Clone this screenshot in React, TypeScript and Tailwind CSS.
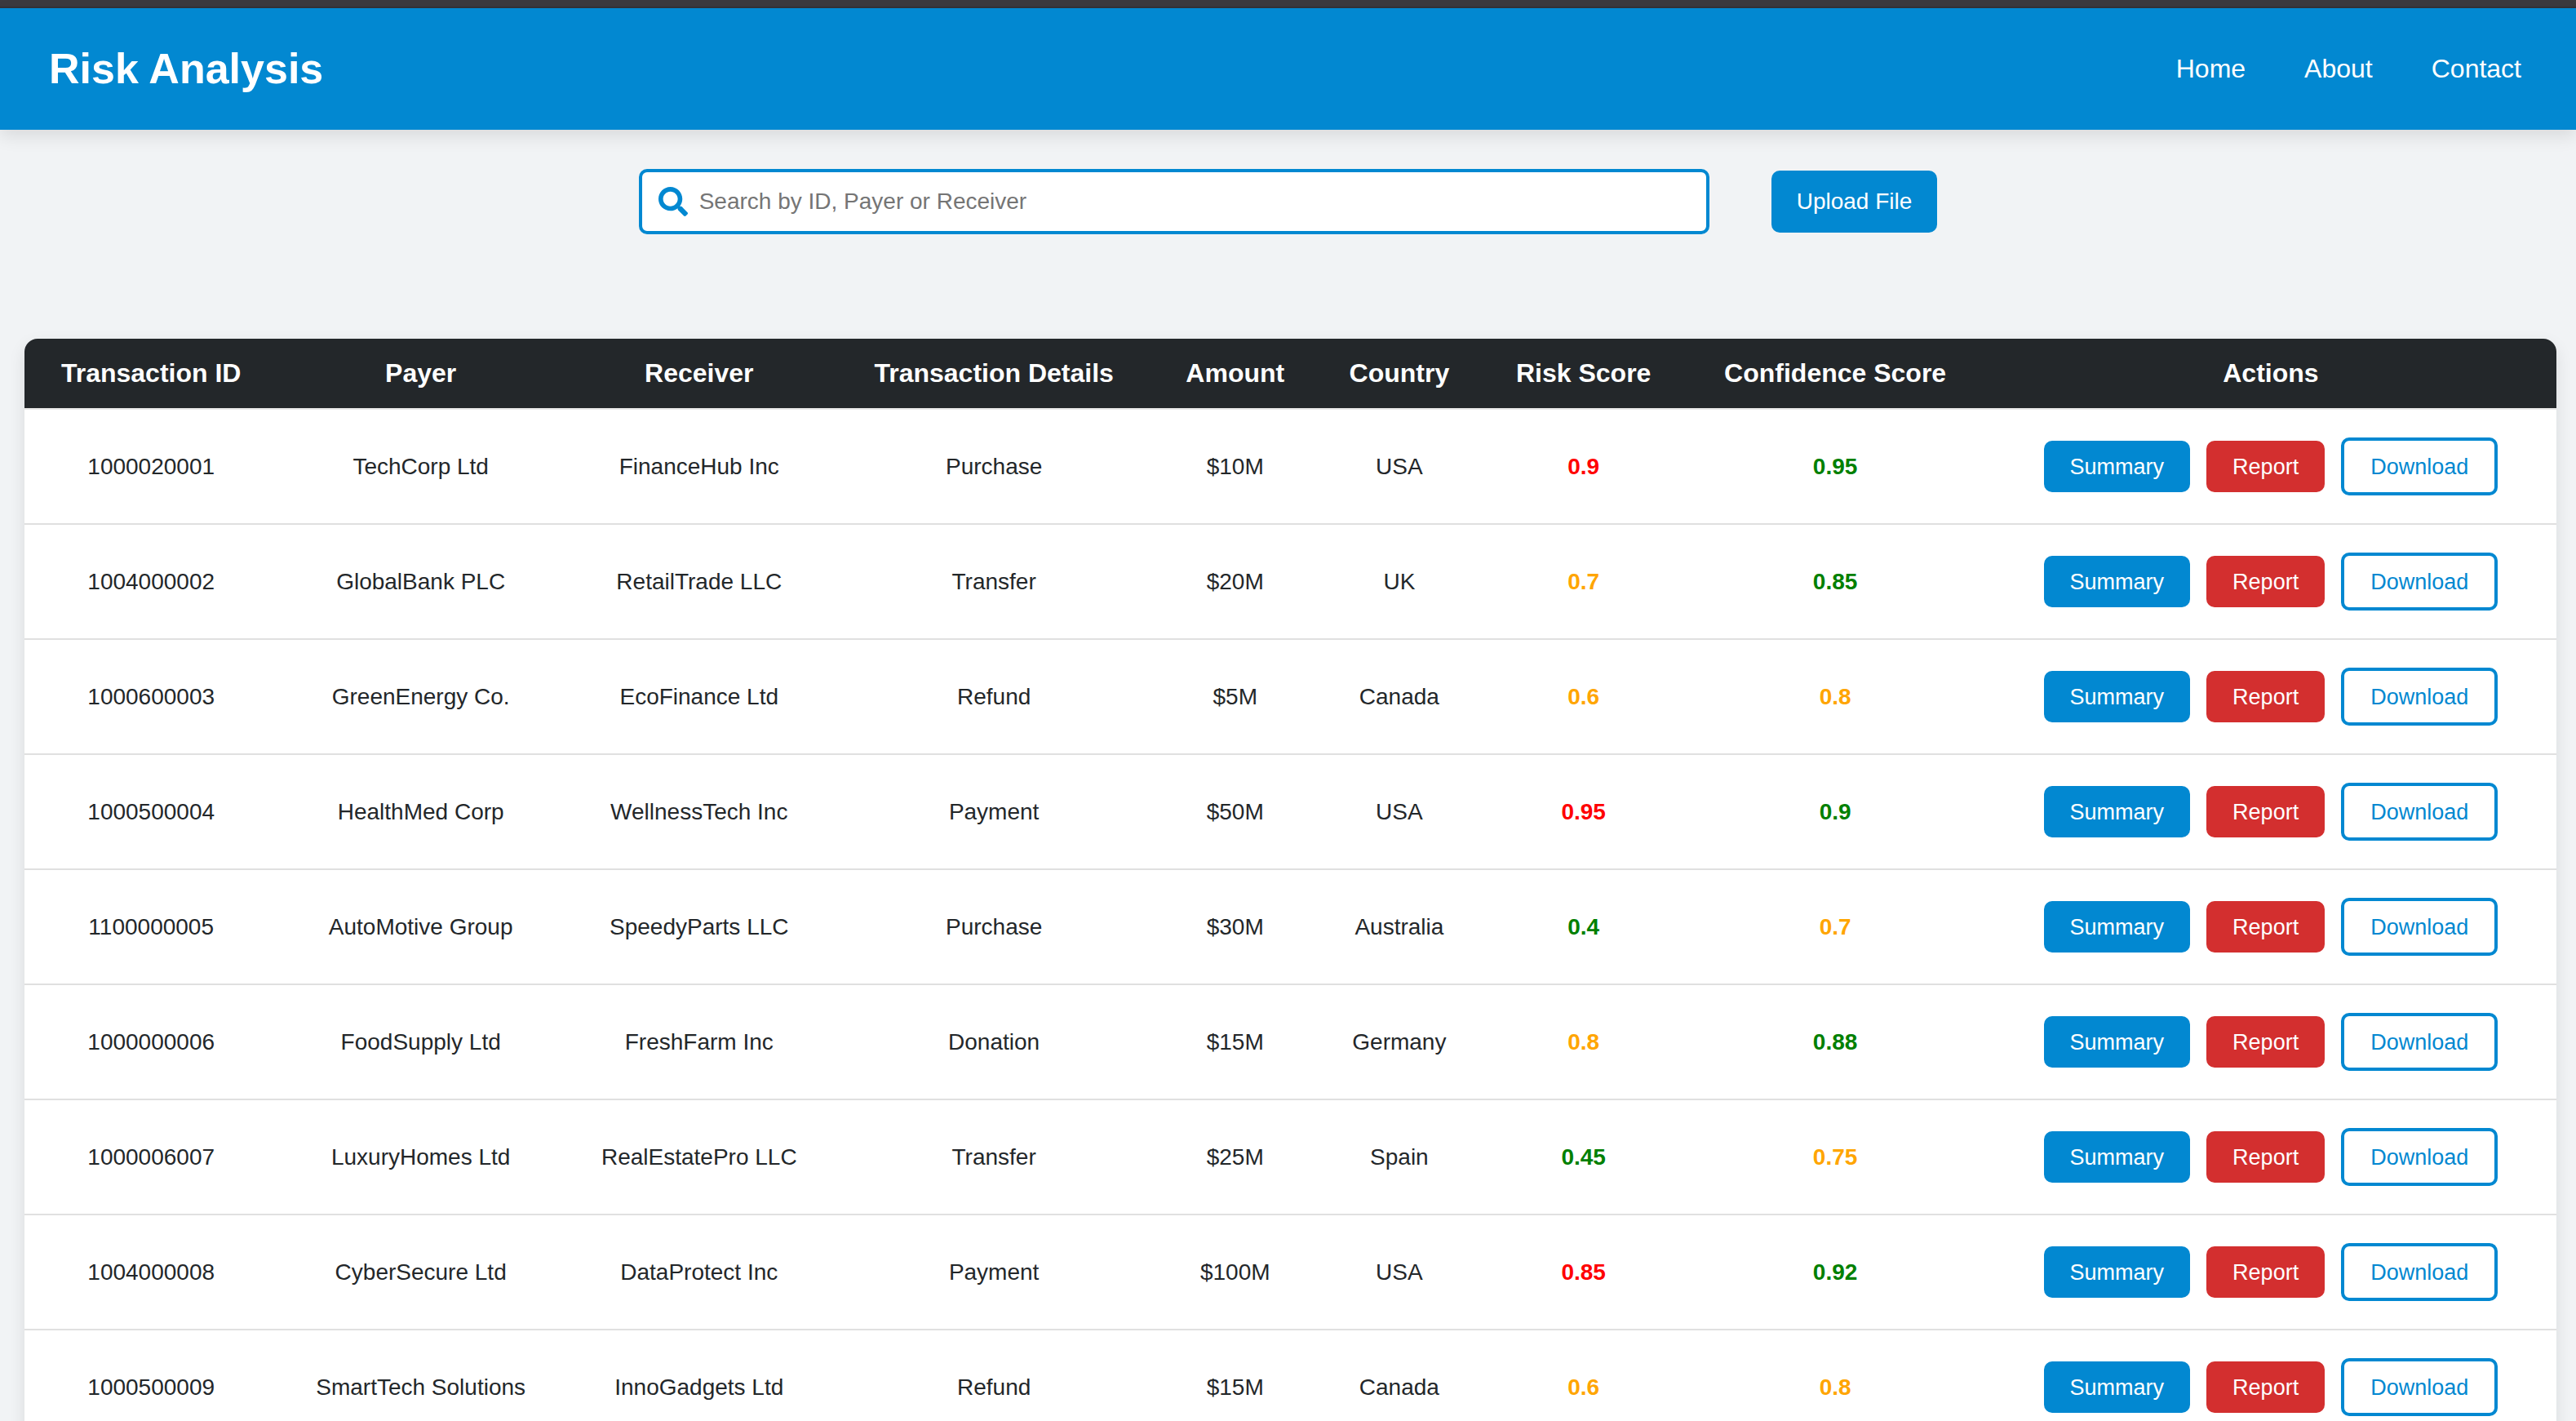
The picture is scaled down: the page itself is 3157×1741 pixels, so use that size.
import { FaSearch } from "react-icons/fa";

type Level = "high" | "medium" | "low";

interface Transaction {
  id: string;
  payer: string;
  receiver: string;
  details: string;
  amount: string;
  country: string;
  risk: number;
  confidence: number;
}

const transactions: Transaction[] = [
  { id: "1000020001", payer: "TechCorp Ltd", receiver: "FinanceHub Inc", details: "Purchase", amount: "$10M", country: "USA", risk: 0.9, confidence: 0.95 },
  { id: "1004000002", payer: "GlobalBank PLC", receiver: "RetailTrade LLC", details: "Transfer", amount: "$20M", country: "UK", risk: 0.7, confidence: 0.85 },
  { id: "1000600003", payer: "GreenEnergy Co.", receiver: "EcoFinance Ltd", details: "Refund", amount: "$5M", country: "Canada", risk: 0.6, confidence: 0.8 },
  { id: "1000500004", payer: "HealthMed Corp", receiver: "WellnessTech Inc", details: "Payment", amount: "$50M", country: "USA", risk: 0.95, confidence: 0.9 },
  { id: "1100000005", payer: "AutoMotive Group", receiver: "SpeedyParts LLC", details: "Purchase", amount: "$30M", country: "Australia", risk: 0.4, confidence: 0.7 },
  { id: "1000000006", payer: "FoodSupply Ltd", receiver: "FreshFarm Inc", details: "Donation", amount: "$15M", country: "Germany", risk: 0.8, confidence: 0.88 },
  { id: "1000006007", payer: "LuxuryHomes Ltd", receiver: "RealEstatePro LLC", details: "Transfer", amount: "$25M", country: "Spain", risk: 0.45, confidence: 0.75 },
  { id: "1004000008", payer: "CyberSecure Ltd", receiver: "DataProtect Inc", details: "Payment", amount: "$100M", country: "USA", risk: 0.85, confidence: 0.92 },
  { id: "1000500009", payer: "SmartTech Solutions", receiver: "InnoGadgets Ltd", details: "Refund", amount: "$15M", country: "Canada", risk: 0.6, confidence: 0.8 },
];

const columns = [
  "Transaction ID",
  "Payer",
  "Receiver",
  "Transaction Details",
  "Amount",
  "Country",
  "Risk Score",
  "Confidence Score",
  "Actions",
];

const levelColor: Record<Level, string> = {
  high: "text-[#ff0000]",
  medium: "text-[#ffa500]",
  low: "text-[#008000]",
};

const riskLevel = (score: number): Level => (score > 0.8 ? "high" : score > 0.5 ? "medium" : "low");
const confidenceLevel = (score: number): Level => (score > 0.8 ? "low" : score > 0.5 ? "medium" : "high");

function Header() {
  return (
    <header className="flex items-center justify-between bg-[#0288d1] py-[44px] pr-[67px] pl-[60px] text-white shadow-[0_8px_20px_rgba(0,0,0,0.1)]">
      <h1 className="text-[52px] leading-[61px] font-bold">Risk Analysis</h1>
      <nav className="flex gap-[72px] pb-0.5 text-[32px] leading-[38px]">
        <a href="#home">Home</a>
        <a href="#about">About</a>
        <a href="#contact">Contact</a>
      </nav>
    </header>
  );
}

function Toolbar() {
  return (
    <div className="flex items-center justify-center gap-[76px] px-[30px]">
      <label className="flex h-20 w-full max-w-[1312px] items-center gap-[14px] rounded-[10px] border-4 border-[#0288d1] bg-white px-5">
        <FaSearch className="size-9 shrink-0 text-[#0288d1]" aria-hidden="true" />
        <input
          type="text"
          aria-label="Search transactions"
          placeholder="Search by ID, Payer or Receiver"
          className="w-full bg-transparent text-[28px] leading-8 outline-none placeholder:text-[#757575]"
        />
      </label>
      <button type="button" className="h-[76px] shrink-0 rounded-[10px] bg-[#0288d1] px-[31px] text-[28px] leading-8 text-white">
        Upload File
      </button>
    </div>
  );
}

function Row({ item }: { item: Transaction }) {
  const cell = "border-b-2 border-[#e0e0e0] px-[30px] py-[34px]";
  return (
    <tr>
      <td className={cell}>{item.id}</td>
      <td className={cell}>{item.payer}</td>
      <td className={cell}>{item.receiver}</td>
      <td className={cell}>{item.details}</td>
      <td className={cell}>{item.amount}</td>
      <td className={cell}>{item.country}</td>
      <td className={`${cell} font-bold ${levelColor[riskLevel(item.risk)]}`}>{item.risk}</td>
      <td className={`${cell} font-bold ${levelColor[confidenceLevel(item.confidence)]}`}>{item.confidence}</td>
      <td className={cell}>
        <div className="flex items-center justify-center gap-5 px-2 text-[27px]">
          <button type="button" className="h-[63px] rounded-[10px] bg-[#0288d1] px-8 text-white">
            Summary
          </button>
          <button type="button" className="h-[63px] rounded-[10px] bg-[#d32f2f] px-8 text-white">
            Report
          </button>
          <button type="button" className="h-[71px] rounded-[10px] border-4 border-[#0288d1] bg-white px-8 text-[#0288d1]">
            Download
          </button>
        </div>
      </td>
    </tr>
  );
}

export default function App() {
  return (
    <div className="min-h-screen bg-[#f1f3f5] font-['Liberation_Sans',Arial,sans-serif] text-[#23272a]">
      <div className="h-[10px] border-b-2 border-[#333238] bg-[#3b3a3f]" />
      <Header />
      <main className="pt-12">
        <Toolbar />
        <div className="mt-32 mr-6 ml-[30px] overflow-hidden rounded-t-[16px] bg-white shadow-[0_8px_20px_rgba(0,0,0,0.1)]">
          <table className="w-full border-separate border-spacing-0 text-center text-[28px] leading-8 whitespace-nowrap">
            <thead>
              <tr>
                {columns.map((name) => (
                  <th key={name} scope="col" className="border-b-2 border-[#e8e8e8] bg-[#23272a] px-[30px] py-6 text-[32px] leading-[37px] font-bold text-white">
                    {name}
                  </th>
                ))}
              </tr>
            </thead>
            <tbody>
              {transactions.map((item) => (
                <Row key={item.id} item={item} />
              ))}
            </tbody>
          </table>
        </div>
      </main>
    </div>
  );
}
